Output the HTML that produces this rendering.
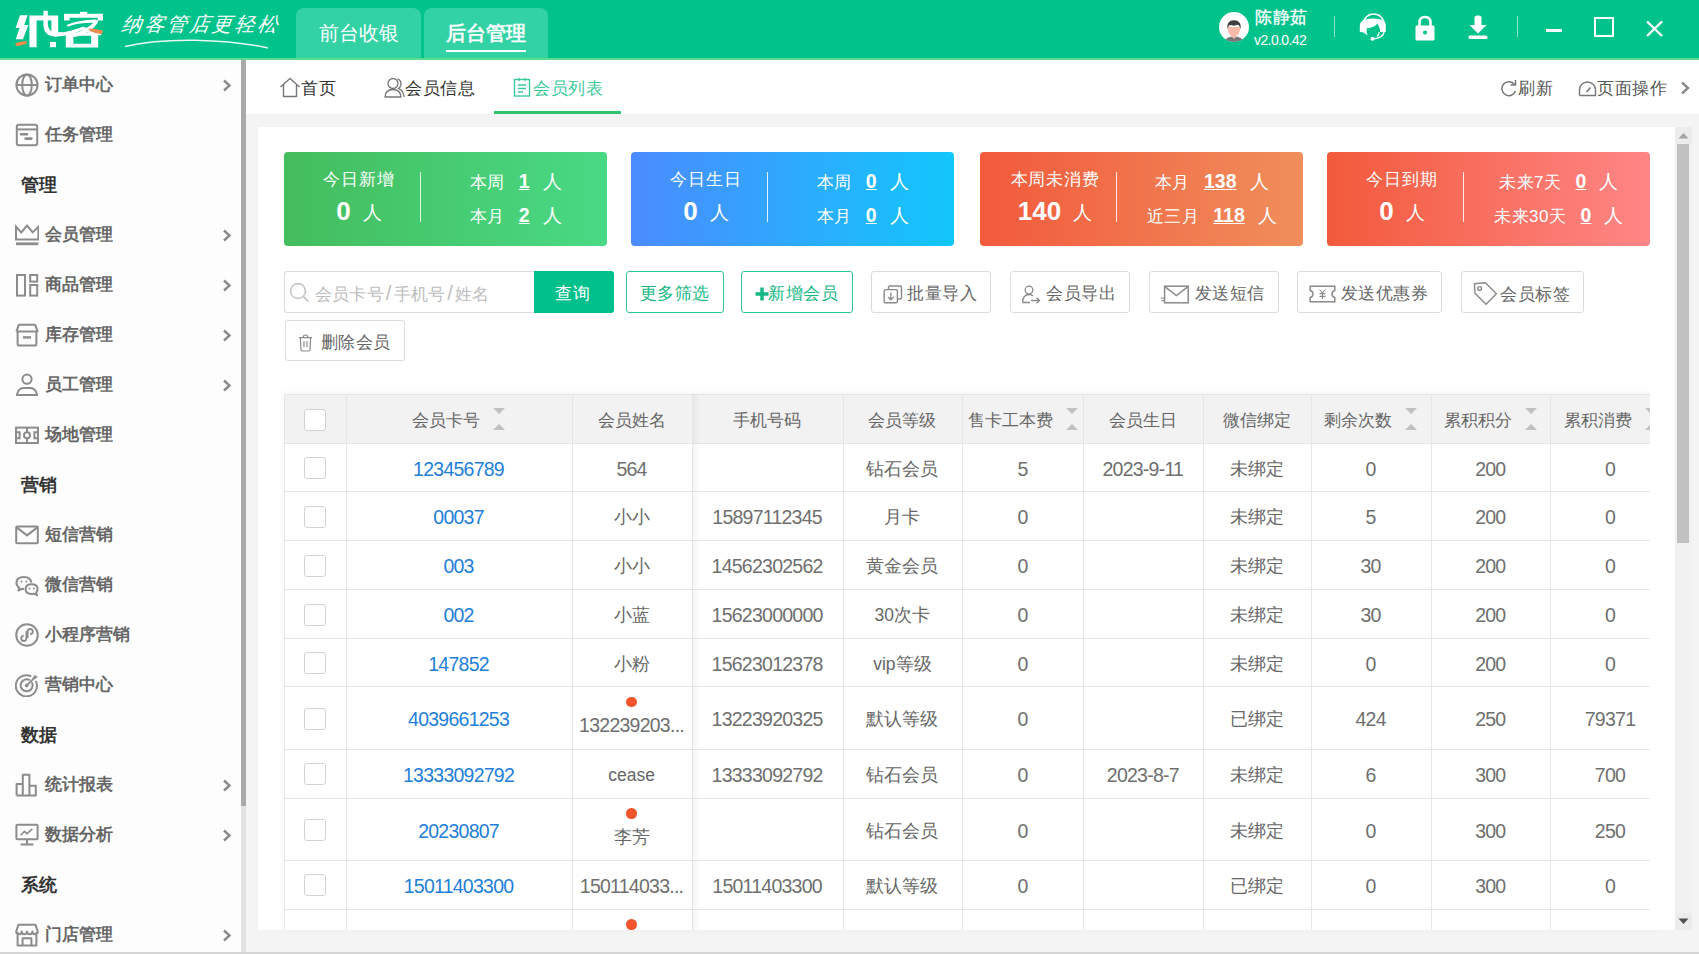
<!DOCTYPE html>
<html><head><meta charset="utf-8">
<style>
*{margin:0;padding:0;box-sizing:border-box}
html,body{width:1699px;height:954px;overflow:hidden;background:#f4f4f4;font-family:"Liberation Sans",sans-serif;}
.a{position:absolute}
.hdr{left:0;top:0;width:1699px;height:58px;background:#00c28b}
.hline{left:0;top:58px;width:1699px;height:2px;background:#5bdc8e}
.tab{top:8px;height:50px;background:#33d2a5;border-radius:8px 8px 0 0;color:#fff;font-size:20px;text-align:center;line-height:50px}
.side{left:0;top:60px;width:241px;height:894px;background:#fdfdfd}
.sb{left:241px;top:60px;width:5px;height:894px;background:#e2e2e2}
.sbt{left:241px;top:60px;width:5px;height:746px;background:#a9a9a9}
.mi{left:0;width:241px;height:50px}
.mi .t{position:absolute;left:45px;top:0;line-height:50px;font-size:17px;color:#666;font-weight:bold}
.mi .ic{position:absolute;left:15px;top:13px;width:24px;height:24px}
.mi .chev{position:absolute;left:222px;top:19px;width:10px;height:13px}
.sec{left:21px;width:200px;height:50px;line-height:50px;font-size:18px;color:#333;font-weight:bold}
.tabbar{left:246px;top:60px;width:1453px;height:54px;background:#fff}
.tt{top:62px;height:54px;line-height:54px;font-size:17px;letter-spacing:0.6px;color:#333}
.card{left:258px;top:127px;width:1417px;height:803px;background:#fff}
.vsb{left:1675px;top:127px;width:17px;height:803px;background:#f1f1f1}
.stat{top:152px;width:323px;height:94px;border-radius:4px;color:#fff}
.btn{top:271px;height:42px;border:1px solid #dcdcdc;border-radius:2px;background:#fff;color:#666;font-size:17px;line-height:40px;text-align:center}
.gbtn{border-color:#1fbf8a;color:#12b07c}
table{border-collapse:collapse;table-layout:fixed}
td,th{border:1px solid #e6e6e6;text-align:center;font-weight:normal;color:#666;font-size:17px;white-space:nowrap;overflow:hidden}
th{background:#f2f2f2;height:49px}
td{height:49px}
.cb{display:inline-block;width:22px;height:22px;border:1px solid #cfcfcf;border-radius:2px;background:#fff;vertical-align:middle}
.blue{color:#1f7fd8}
.dot{display:block;width:10px;height:10px;border-radius:5px;background:#f2552c;margin:0 auto 6px}

.st1{left:0;width:150px;top:17px;text-align:center;font-size:17px;letter-spacing:0.8px;line-height:22px}
.st2{left:0;width:150px;top:44px;text-align:center;line-height:30px}
.st2 b{font-size:26px;font-weight:bold}
.st2 span{font-size:19px;margin-left:12px;position:relative;top:-1px}
.sdiv{left:136px;top:20px;width:1px;height:50px;background:rgba(255,255,255,0.85)}
.sr{left:137px;width:190px;text-align:center;font-size:17px;letter-spacing:0.5px;line-height:22px;white-space:nowrap}
.sr u{font-weight:bold;font-size:19.5px;letter-spacing:0;margin:0 13px 0 14px;text-decoration-thickness:1.2px;text-underline-offset:1px}
.sr span:last-child{font-size:18.5px}

.hl{left:0;width:1400px;height:1px;background:#e6e6e6}
.vl{top:0;width:1px;height:600px;background:#e6e6e6}
.cbx{width:22px;height:22px;border:1px solid #d2d2d2;border-radius:3px;background:#fff}
.th{text-align:center;font-size:17px;color:#666;white-space:nowrap}
.td{text-align:center;font-size:17.5px;color:#666;white-space:nowrap}
.td.blue{color:#1f80d9}
.sort{display:inline-block;position:relative;width:12px;height:22px;margin-left:13px;vertical-align:middle;top:-2px}
.sort:before{content:"";position:absolute;left:0;top:0;border-left:6px solid transparent;border-right:6px solid transparent;border-top:6px solid #c0c0c0}
.sort:after{content:"";position:absolute;left:0;bottom:0;border-left:6px solid transparent;border-right:6px solid transparent;border-bottom:6px solid #c0c0c0}
.dotcell{display:flex;flex-direction:column;align-items:center;justify-content:center}
.dot{width:10.5px;height:10.5px;border-radius:50%;background:#f2552c}
.num{font-size:19.5px;letter-spacing:-0.75px;color:#6f6f6f}
.dotcell span{line-height:22px}

.bx{top:271px;height:42px;border:1px solid #dcdcdc;border-radius:3px;background:#fff}
.gb{border:1.5px solid #2cc79a}
.bt{font-size:17px;letter-spacing:0.5px;line-height:22px;margin-top:0.5px;color:#666;white-space:nowrap}
.sl{font-size:20px;margin:0 2px}
</style></head>
<body>
<!-- HEADER -->
<div class="a hdr"></div>
<div class="a hline"></div>
<svg class="a" style="left:0;top:0" width="290" height="58" viewBox="0 0 290 58">
<g fill="#fff">
<path d="M20 15.3H27.6L24.2 25H28.4L22.9 39.2H15.8L19.6 28H15.6L20 15.3Z"/>
<path d="M29.4 15.6H58.2V34.6H51.4V20.4H36.6V47.2H29.4Z"/>
<path d="M43.4 10.8H47.8V22Q47.8 30 52 31.5Q56 33 62 31.8L63 35.5Q55 38 48.5 35Q43.4 32 43.4 24Z"/>
<path d="M50 42H56V47.2H50Z"/>
<path d="M80 11.8H87.2V15.2H80Z"/>
<path d="M64 13.8H103V20.4H97.6V17.8H69.6V20.6H64Z"/>
<path d="M68 26.8Q76 23 93.5 22.8Q86 30 70 35.5L75 37Q92 33 98.2 22Q98 19.6 95 19.6Q80 19.8 66.5 25Z"/>
<path d="M60 33Q75 30 83 26.5Q92 31 102 32.6L100.5 35.4Q90 34 82 30.2Q74 34 61.5 36.2Z"/>
<path d="M65.8 32.4H98.2V47.6H65.8ZM73.4 35.8V43.8H91.2V35.8Z" fill-rule="evenodd"/>
</g>
<path d="M15.2 43.5Q20 41 27 41.2L26.5 43.8Q22 45.8 16 46Z" fill="#f08a4b"/>
<path d="M88.6 28.6Q95 28.8 102.8 30.5L102.2 34.2Q96 34 90 31Z" fill="#f08a4b"/>
<path d="M125 46.5Q155 39.5 195 40.2Q240 41.5 268 48" stroke="#fff" stroke-width="1.5" fill="none" opacity="0.9"/>
</svg>
<div class="a" style="left:122px;top:10px;font-size:20px;color:#fff;letter-spacing:2.6px;line-height:28px;font-style:italic;transform:skewX(-8deg)">纳客管店更轻松</div>
<div class="a tab" style="left:296px;width:125px">前台收银</div>
<div class="a tab" style="left:424px;width:124px;font-weight:bold">后台管理</div>
<div class="a" style="left:446px;top:50px;width:80px;height:2px;background:#fff"></div>


<!-- header right -->
<svg class="a" style="left:1219px;top:12px" width="30" height="30" viewBox="0 0 30 30">
<defs><clipPath id="av"><circle cx="15" cy="15" r="15"/></clipPath></defs>
<circle cx="15" cy="15" r="15" fill="#fff"/>
<g clip-path="url(#av)">
<path d="M5.5 32Q5 24.5 15 24.5Q25 24.5 24.5 32Z" fill="#767676"/>
<path d="M13.5 21H16.5V25.5L15 27L13.5 25.5Z" fill="#f5b5a3"/>
<path d="M8.8 15Q8.8 24 15 24.5Q21.2 24 21.2 15Z" fill="#f7baa8"/>
<path d="M8.2 17Q7.5 8.5 15 8.3Q22.5 8.5 21.8 17L20.5 14.5Q20 12 17.5 13Q15 14 12 13Q9.5 12.5 9.5 14.5Z" fill="#3d3d3d"/>
</g></svg>
<div class="a" style="left:1255px;top:7px;font-size:17px;color:#fff;line-height:22px;letter-spacing:0.5px;-webkit-text-stroke:0.3px #fff">陈静茹</div>
<div class="a" style="left:1254px;top:30px;font-size:14px;color:#fff;line-height:20px;letter-spacing:-0.6px">v2.0.0.42</div>
<div class="a" style="left:1334px;top:16px;width:1px;height:21px;background:rgba(255,255,255,0.55)"></div>
<svg class="a" style="left:1355px;top:8px" width="40" height="38" viewBox="0 0 40 38">
<path d="M8.2 16.5A10.5 10.5 0 0 1 29.2 16.5" stroke="#fff" stroke-width="1.5" fill="none"/>
<path d="M4.8 24V17.5Q5.2 10.5 18 10.5Q30.8 10.5 30.8 17.5V24H25.2Q24.8 18.5 22.2 15.8Q19.5 19.8 11.8 20.2Q11.2 24 12.6 27.6L8.6 24.6Q8 24 4.8 24Z" fill="#fff"/><path d="M24.2 24Q24 27 22 28.5" stroke="#fff" stroke-width="1.2" fill="none"/>
<path d="M29 24Q28.5 30 18 31" stroke="#fff" stroke-width="1.5" fill="none"/>
<circle cx="17.5" cy="30.8" r="2" fill="#fff"/>
</svg>
<svg class="a" style="left:1413px;top:14px" width="24" height="28" viewBox="0 0 24 28">
<path d="M6.5 12V8.5Q6.5 3 12 3Q17.5 3 17.5 8.5V12" stroke="#fff" stroke-width="2.6" fill="none"/>
<rect x="2.5" y="11.5" width="19" height="15" rx="1.5" fill="#fff"/>
<circle cx="12" cy="18.5" r="2" fill="#00c28b"/>
</svg>
<svg class="a" style="left:1466px;top:14px" width="24" height="28" viewBox="0 0 24 28">
<path d="M8.5 4Q8.5 1.5 11 1.5H13Q15.5 1.5 15.5 4V11H20.5L12 19.5L3.5 11H8.5Z" fill="#fff"/>
<rect x="2.5" y="21.5" width="19" height="3.5" rx="1.5" fill="#fff"/>
</svg>
<div class="a" style="left:1517px;top:16px;width:1px;height:21px;background:rgba(255,255,255,0.55)"></div>
<div class="a" style="left:1546px;top:29px;width:16px;height:3px;background:#fff"></div>
<div class="a" style="left:1594px;top:17px;width:20px;height:20px;border:2.4px solid #fff"></div>
<svg class="a" style="left:1645px;top:19px" width="19" height="19" viewBox="0 0 19 19"><path d="M2 2.5L17 17M17 2.5L2 17" stroke="#fff" stroke-width="2.4"/></svg>

<!-- SIDEBAR -->
<div class="a side"></div>
<div class="a sb"></div>
<div class="a sbt"></div>
<div class="a mi" style="top:60px"><svg class="ic" viewBox="0 0 24 24"><circle cx="12" cy="12" r="10.6" stroke="#8c8c8c" stroke-width="2" fill="none"/><ellipse cx="12" cy="12" rx="4.8" ry="10.6" stroke="#8c8c8c" stroke-width="2" fill="none"/><path d="M1.4 12H22.6" stroke="#8c8c8c" stroke-width="2" fill="none"/></svg><span class="t">订单中心</span><svg class="chev" viewBox="0 0 10 13"><path d="M2 1.5L7.5 6.5L2 11.5" stroke="#8a8a8a" stroke-width="2.4" fill="none"/></svg></div>
<div class="a mi" style="top:110px"><svg class="ic" viewBox="0 0 24 24"><rect x="1.8" y="1.8" width="20.4" height="20.4" rx="2.2" stroke="#8c8c8c" stroke-width="2" fill="none"/><path d="M1.8 6.4H22.2" stroke="#8c8c8c" stroke-width="2" fill="none"/><path d="M6 11.2H12M10.6 15.6H16.4" stroke="#8c8c8c" stroke-width="2.6" stroke-linecap="round" fill="none"/></svg><span class="t">任务管理</span></div>
<div class="a sec" style="top:160px">管理</div>
<div class="a mi" style="top:210px"><svg class="ic" viewBox="0 0 24 24"><path d="M1 3.8L6.3 9.4L12 2.6L17.7 9.4L23.4 3.8V16.4H1Z" stroke="#8c8c8c" stroke-width="2" fill="none" stroke-linejoin="miter"/><path d="M1 20.8H23.4" stroke="#8c8c8c" stroke-width="2.8" fill="none"/></svg><span class="t">会员管理</span><svg class="chev" viewBox="0 0 10 13"><path d="M2 1.5L7.5 6.5L2 11.5" stroke="#8a8a8a" stroke-width="2.4" fill="none"/></svg></div>
<div class="a mi" style="top:260px"><svg class="ic" viewBox="0 0 24 24"><rect x="2" y="2" width="8" height="20.6" stroke="#8c8c8c" stroke-width="2" fill="none"/><rect x="15.2" y="2" width="7" height="6.6" stroke="#8c8c8c" stroke-width="2" fill="none"/><rect x="15.2" y="12" width="7" height="10.6" stroke="#8c8c8c" stroke-width="2" fill="none"/></svg><span class="t">商品管理</span><svg class="chev" viewBox="0 0 10 13"><path d="M2 1.5L7.5 6.5L2 11.5" stroke="#8a8a8a" stroke-width="2.4" fill="none"/></svg></div>
<div class="a mi" style="top:310px"><svg class="ic" viewBox="0 0 24 24"><path d="M2.6 8.8V20.4Q2.6 22.6 4.8 22.6H19.2Q21.4 22.6 21.4 20.4V8.8M1.4 8.4L3.8 1.8H20.2L22.6 8.4H1.4" stroke="#8c8c8c" stroke-width="2" fill="none" stroke-linejoin="round"/><path d="M8 14.4H16" stroke="#8c8c8c" stroke-width="2.4" fill="none"/></svg><span class="t">库存管理</span><svg class="chev" viewBox="0 0 10 13"><path d="M2 1.5L7.5 6.5L2 11.5" stroke="#8a8a8a" stroke-width="2.4" fill="none"/></svg></div>
<div class="a mi" style="top:360px"><svg class="ic" viewBox="0 0 24 24"><circle cx="12" cy="6.2" r="4.6" stroke="#8c8c8c" stroke-width="2" fill="none"/><path d="M1.8 22Q3.6 15 8.2 15H15.8Q20.4 15 22.2 22Z" stroke="#8c8c8c" stroke-width="2" fill="none" stroke-linejoin="round"/></svg><span class="t">员工管理</span><svg class="chev" viewBox="0 0 10 13"><path d="M2 1.5L7.5 6.5L2 11.5" stroke="#8a8a8a" stroke-width="2.4" fill="none"/></svg></div>
<div class="a mi" style="top:410px"><svg class="ic" viewBox="0 0 24 24"><rect x="1" y="4.6" width="22" height="15.4" stroke="#8c8c8c" stroke-width="2" fill="none"/><path d="M12 4.6V9M12 15.4V20M1 9.2H4.6V15.2H1M23 9.2H19.4V15.2H23" stroke="#8c8c8c" stroke-width="2" fill="none"/><circle cx="12" cy="12.2" r="3" stroke="#8c8c8c" stroke-width="2" fill="none"/></svg><span class="t">场地管理</span></div>
<div class="a sec" style="top:460px">营销</div>
<div class="a mi" style="top:510px"><svg class="ic" viewBox="0 0 24 24"><rect x="1.2" y="3.6" width="21.6" height="16.6" rx="1" stroke="#8c8c8c" stroke-width="2" fill="none"/><path d="M1.6 4.4L12 12.4L22.4 4.4" stroke="#8c8c8c" stroke-width="2" fill="none"/></svg><span class="t">短信营销</span></div>
<div class="a mi" style="top:560px"><svg class="ic" viewBox="0 0 24 24"><path d="M16.4 9.6Q15.4 4 9 4Q1.6 4 1.4 9.8Q1.4 13 4.4 14.8L3.4 17.6L7 15.8Q8 16.1 9.2 16.1" stroke="#8c8c8c" stroke-width="2" fill="none" stroke-linejoin="round"/><path d="M22.6 16.1Q22.6 11.2 16.6 11.2Q10.6 11.2 10.6 16.1Q10.6 21 16.6 21Q17.8 21 18.8 20.6L22 22.2L21.2 19.6Q22.6 18.3 22.6 16.1Z" stroke="#8c8c8c" stroke-width="2" fill="none" stroke-linejoin="round"/><circle cx="6.5" cy="8.6" r="1" fill="#8c8c8c"/><circle cx="11.4" cy="8.6" r="1" fill="#8c8c8c"/><circle cx="14.5" cy="15.6" r="1" fill="#8c8c8c"/><circle cx="18.8" cy="15.6" r="1" fill="#8c8c8c"/></svg><span class="t">微信营销</span></div>
<div class="a mi" style="top:610px"><svg class="ic" viewBox="0 0 24 24"><circle cx="12" cy="12" r="10.8" stroke="#8c8c8c" stroke-width="2" fill="none"/><path d="M11.4 15.2Q11.4 18 8.8 18Q6.2 18 6.2 15.4Q6.2 13 8.8 12.6M12.6 8.8Q12.6 6 15.2 6Q17.8 6 17.8 8.6Q17.8 11 15.2 11.4M11.4 15.2V8.8Q11.4 8.8 12.6 8.8V15.2" stroke="#8c8c8c" stroke-width="1.8" fill="none"/></svg><span class="t">小程序营销</span></div>
<div class="a mi" style="top:660px"><svg class="ic" viewBox="0 0 24 24"><path d="M20.8 8A10.6 10.6 0 1 1 16.2 3.4" stroke="#8c8c8c" stroke-width="2" fill="none"/><path d="M16.8 9.2A6 6 0 1 1 14.8 7.2" stroke="#8c8c8c" stroke-width="2" fill="none"/><circle cx="11.6" cy="12.6" r="1.8" fill="#8c8c8c"/><path d="M11.6 12.6L19.8 4.4" stroke="#8c8c8c" stroke-width="2" fill="none"/><path d="M17.6 4.6L20.6 1.4L21 3.2L23 3.6L19.8 6.6Z" fill="#8c8c8c"/></svg><span class="t">营销中心</span></div>
<div class="a sec" style="top:710px">数据</div>
<div class="a mi" style="top:760px"><svg class="ic" viewBox="0 0 24 24"><path d="M1.6 22.4V11H7.8V22.4M7.8 22.4V1.8H14.4V22.4M14.4 22.4V12.8H20.8V22.4H1.6" stroke="#8c8c8c" stroke-width="2" fill="none" stroke-linejoin="round"/></svg><span class="t">统计报表</span><svg class="chev" viewBox="0 0 10 13"><path d="M2 1.5L7.5 6.5L2 11.5" stroke="#8a8a8a" stroke-width="2.4" fill="none"/></svg></div>
<div class="a mi" style="top:810px"><svg class="ic" viewBox="0 0 24 24"><rect x="1.4" y="1.8" width="21.2" height="14.4" rx="1" stroke="#8c8c8c" stroke-width="2" fill="none"/><path d="M12 16.2V20.6M5.6 21.6H18.4" stroke="#8c8c8c" stroke-width="2" fill="none"/><path d="M5.6 12.2L9.4 8.4L12 10.6L17.4 5.8" stroke="#8c8c8c" stroke-width="1.6" fill="none"/></svg><span class="t">数据分析</span><svg class="chev" viewBox="0 0 10 13"><path d="M2 1.5L7.5 6.5L2 11.5" stroke="#8a8a8a" stroke-width="2.4" fill="none"/></svg></div>
<div class="a sec" style="top:860px">系统</div>
<div class="a mi" style="top:910px"><svg class="ic" viewBox="0 0 24 24"><path d="M2.6 9V22.4H21.4V9M1.2 8.6L3.4 1.8H20.6L22.8 8.6Q22.8 11.2 20 11.2Q17.4 11.2 17.4 8.6Q17.4 11.2 14.7 11.2Q12 11.2 12 8.6Q12 11.2 9.3 11.2Q6.6 11.2 6.6 8.6Q6.6 11.2 4 11.2Q1.2 11.2 1.2 8.6ZM7.6 22.4V15.2H16.4V22.4" stroke="#8c8c8c" stroke-width="2" fill="none" stroke-linejoin="round"/></svg><span class="t">门店管理</span><svg class="chev" viewBox="0 0 10 13"><path d="M2 1.5L7.5 6.5L2 11.5" stroke="#8a8a8a" stroke-width="2.4" fill="none"/></svg></div>

<!-- TAB BAR -->
<div class="a tabbar"></div>
<div class="a tt" style="left:301px">首页</div>
<div class="a tt" style="left:405px">会员信息</div>
<div class="a tt" style="left:533px;color:#3cc99a">会员列表</div>
<div class="a" style="left:494px;top:111px;width:127px;height:3px;background:#2ec46c"></div>
<div class="a tt" style="left:1518px;color:#555">刷新</div>
<div class="a tt" style="left:1597px;color:#555">页面操作</div>


<svg class="a" style="left:279px;top:77px" width="22" height="21" viewBox="0 0 22 21"><path d="M1.5 10L11 1.5L20.5 10M4.5 8V19.5H17.5V8" stroke="#777" stroke-width="1.4" fill="none" stroke-linejoin="round"/></svg>
<svg class="a" style="left:384px;top:77px" width="21" height="21" viewBox="0 0 21 21"><circle cx="9" cy="6.5" r="5" stroke="#777" stroke-width="1.3" fill="none"/><path d="M1 20Q1.5 12.5 9 12.5Q16.5 12.5 17 20Z" stroke="#777" stroke-width="1.3" fill="none" stroke-linejoin="round"/><path d="M13.5 1.8Q17.5 3 16.8 8.2Q16 10.5 14.5 11.5Q19.5 13.5 20 20" stroke="#777" stroke-width="1.3" fill="none"/></svg>
<svg class="a" style="left:513px;top:77px" width="19" height="20" viewBox="0 0 19 20"><rect x="1.5" y="2.5" width="15" height="16.5" stroke="#3cc99a" stroke-width="1.4" fill="none"/><path d="M6 1V4M12 1V4M5 8H13M5 11.5H13M5 15H10" stroke="#3cc99a" stroke-width="1.4" fill="none"/></svg>
<svg class="a" style="left:1500px;top:79px" width="18" height="18" viewBox="0 0 18 18"><path d="M14.5 5.5A7 7 0 1 0 15.5 12" stroke="#777" stroke-width="1.5" fill="none"/><path d="M10.5 6H15.5V1" stroke="#777" stroke-width="1.5" fill="none"/></svg>
<svg class="a" style="left:1578px;top:80px" width="19" height="17" viewBox="0 0 19 17"><path d="M1.5 15.5V10A8 8 0 0 1 17.5 10V15.5H1.5" stroke="#777" stroke-width="1.4" fill="none"/><path d="M8.5 12L12.5 7.5" stroke="#777" stroke-width="1.6"/></svg>
<svg class="a" style="left:1680px;top:81px" width="11" height="14" viewBox="0 0 11 14"><path d="M2 1.5L8 7L2 12.5" stroke="#8a8a8a" stroke-width="2.4" fill="none"/></svg>

<!-- CARD -->
<div class="a card"></div>
<div class="a vsb"></div>
<!-- STAT CARDS -->
<div class="a stat" style="left:284px;background:linear-gradient(90deg,#44bd5d,#49d985)"><div class="a st1">今日新增</div><div class="a st2"><b>0</b><span>人</span></div><div class="a sdiv"></div><div class="a sr" style="top:18px"><span>本周</span><u>1</u><span>人</span></div><div class="a sr" style="top:52px"><span>本月</span><u>2</u><span>人</span></div></div>
<div class="a stat" style="left:631px;background:linear-gradient(90deg,#4b8bff,#12c7fb)"><div class="a st1">今日生日</div><div class="a st2"><b>0</b><span>人</span></div><div class="a sdiv"></div><div class="a sr" style="top:18px"><span>本周</span><u>0</u><span>人</span></div><div class="a sr" style="top:52px"><span>本月</span><u>0</u><span>人</span></div></div>
<div class="a stat" style="left:980px;background:linear-gradient(90deg,#f25a3b,#f08e5c)"><div class="a st1">本周未消费</div><div class="a st2"><b>140</b><span>人</span></div><div class="a sdiv"></div><div class="a sr" style="top:18px"><span>本月</span><u>138</u><span>人</span></div><div class="a sr" style="top:52px"><span>近三月</span><u>118</u><span>人</span></div></div>
<div class="a stat" style="left:1327px;background:linear-gradient(90deg,#f25a3b,#ff8686)"><div class="a st1">今日到期</div><div class="a st2"><b>0</b><span>人</span></div><div class="a sdiv"></div><div class="a sr" style="top:18px"><span>未来7天</span><u>0</u><span>人</span></div><div class="a sr" style="top:52px"><span>未来30天</span><u>0</u><span>人</span></div></div>
<!-- TABLE -->
<div class="a" style="left:284px;top:394px;width:1380px;height:536px;box-shadow:0 -1px 7px rgba(0,0,0,0.05)"></div>
<div class="a" style="left:1650px;top:380px;width:25px;height:550px;background:#fff"></div>
<div class="a" style="left:284px;top:394px;width:1366px;height:536px;overflow:hidden">
<div class="a" style="left:0;top:0;width:1400px;height:48.9px;background:#f2f2f2"></div>
<div class="a hl" style="top:0.3px"></div>
<div class="a hl" style="top:48.9px"></div>
<div class="a hl" style="top:97.4px"></div>
<div class="a hl" style="top:146.4px"></div>
<div class="a hl" style="top:195.3px"></div>
<div class="a hl" style="top:243.9px"></div>
<div class="a hl" style="top:292.3px"></div>
<div class="a hl" style="top:354.8px"></div>
<div class="a hl" style="top:403.6px"></div>
<div class="a hl" style="top:465.6px"></div>
<div class="a hl" style="top:514.6px"></div>
<div class="a vl" style="left:0.0px"></div>
<div class="a vl" style="left:61.5px"></div>
<div class="a vl" style="left:287.6px"></div>
<div class="a vl" style="left:407.5px"></div>
<div class="a vl" style="left:558.7px"></div>
<div class="a vl" style="left:678.0px"></div>
<div class="a vl" style="left:799.0px"></div>
<div class="a vl" style="left:918.7px"></div>
<div class="a vl" style="left:1026.6px"></div>
<div class="a vl" style="left:1146.6px"></div>
<div class="a vl" style="left:1266.0px"></div>
<div class="a cbx" style="left:19.8px;top:14.6px"></div>
<div class="a th" style="left:61.5px;width:226.1px;top:2.8px;height:48.6px;line-height:48.6px">会员卡号<i class="sort"></i></div>
<div class="a th" style="left:287.6px;width:119.9px;top:2.8px;height:48.6px;line-height:48.6px">会员姓名</div>
<div class="a th" style="left:407.5px;width:151.2px;top:2.8px;height:48.6px;line-height:48.6px">手机号码</div>
<div class="a th" style="left:558.7px;width:119.3px;top:2.8px;height:48.6px;line-height:48.6px">会员等级</div>
<div class="a th" style="left:678.0px;width:121.0px;top:2.8px;height:48.6px;line-height:48.6px">售卡工本费<i class="sort"></i></div>
<div class="a th" style="left:799.0px;width:119.7px;top:2.8px;height:48.6px;line-height:48.6px">会员生日</div>
<div class="a th" style="left:918.7px;width:107.9px;top:2.8px;height:48.6px;line-height:48.6px">微信绑定</div>
<div class="a th" style="left:1026.6px;width:120.0px;top:2.8px;height:48.6px;line-height:48.6px">剩余次数<i class="sort"></i></div>
<div class="a th" style="left:1146.6px;width:119.4px;top:2.8px;height:48.6px;line-height:48.6px">累积积分<i class="sort"></i></div>
<div class="a th" style="left:1266.0px;width:120.0px;top:2.8px;height:48.6px;line-height:48.6px">累积消费<i class="sort"></i></div>
<div class="a cbx" style="left:19.8px;top:63.1px"></div>
<div class="a td blue num" style="left:61.5px;width:226.1px;top:50.9px;height:48.5px;line-height:48.5px">123456789</div>
<div class="a td num" style="left:287.6px;width:119.9px;top:50.9px;height:48.5px;line-height:48.5px">564</div>
<div class="a td" style="left:407.5px;width:151.2px;top:50.9px;height:48.5px;line-height:48.5px"></div>
<div class="a td" style="left:558.7px;width:119.3px;top:50.9px;height:48.5px;line-height:48.5px">钻石会员</div>
<div class="a td num" style="left:678.0px;width:121.0px;top:50.9px;height:48.5px;line-height:48.5px">5</div>
<div class="a td num" style="left:799.0px;width:119.7px;top:50.9px;height:48.5px;line-height:48.5px">2023-9-11</div>
<div class="a td" style="left:918.7px;width:107.9px;top:50.9px;height:48.5px;line-height:48.5px">未绑定</div>
<div class="a td num" style="left:1026.6px;width:120.0px;top:50.9px;height:48.5px;line-height:48.5px">0</div>
<div class="a td num" style="left:1146.6px;width:119.4px;top:50.9px;height:48.5px;line-height:48.5px">200</div>
<div class="a td num" style="left:1266.0px;width:120.0px;top:50.9px;height:48.5px;line-height:48.5px">0</div>
<div class="a cbx" style="left:19.8px;top:111.9px"></div>
<div class="a td blue num" style="left:61.5px;width:226.1px;top:99.4px;height:49.0px;line-height:49.0px">00037</div>
<div class="a td" style="left:287.6px;width:119.9px;top:99.4px;height:49.0px;line-height:49.0px">小小</div>
<div class="a td num" style="left:407.5px;width:151.2px;top:99.4px;height:49.0px;line-height:49.0px">15897112345</div>
<div class="a td" style="left:558.7px;width:119.3px;top:99.4px;height:49.0px;line-height:49.0px">月卡</div>
<div class="a td num" style="left:678.0px;width:121.0px;top:99.4px;height:49.0px;line-height:49.0px">0</div>
<div class="a td" style="left:799.0px;width:119.7px;top:99.4px;height:49.0px;line-height:49.0px"></div>
<div class="a td" style="left:918.7px;width:107.9px;top:99.4px;height:49.0px;line-height:49.0px">未绑定</div>
<div class="a td num" style="left:1026.6px;width:120.0px;top:99.4px;height:49.0px;line-height:49.0px">5</div>
<div class="a td num" style="left:1146.6px;width:119.4px;top:99.4px;height:49.0px;line-height:49.0px">200</div>
<div class="a td num" style="left:1266.0px;width:120.0px;top:99.4px;height:49.0px;line-height:49.0px">0</div>
<div class="a cbx" style="left:19.8px;top:160.8px"></div>
<div class="a td blue num" style="left:61.5px;width:226.1px;top:148.4px;height:48.9px;line-height:48.9px">003</div>
<div class="a td" style="left:287.6px;width:119.9px;top:148.4px;height:48.9px;line-height:48.9px">小小</div>
<div class="a td num" style="left:407.5px;width:151.2px;top:148.4px;height:48.9px;line-height:48.9px">14562302562</div>
<div class="a td" style="left:558.7px;width:119.3px;top:148.4px;height:48.9px;line-height:48.9px">黄金会员</div>
<div class="a td num" style="left:678.0px;width:121.0px;top:148.4px;height:48.9px;line-height:48.9px">0</div>
<div class="a td" style="left:799.0px;width:119.7px;top:148.4px;height:48.9px;line-height:48.9px"></div>
<div class="a td" style="left:918.7px;width:107.9px;top:148.4px;height:48.9px;line-height:48.9px">未绑定</div>
<div class="a td num" style="left:1026.6px;width:120.0px;top:148.4px;height:48.9px;line-height:48.9px">30</div>
<div class="a td num" style="left:1146.6px;width:119.4px;top:148.4px;height:48.9px;line-height:48.9px">200</div>
<div class="a td num" style="left:1266.0px;width:120.0px;top:148.4px;height:48.9px;line-height:48.9px">0</div>
<div class="a cbx" style="left:19.8px;top:209.6px"></div>
<div class="a td blue num" style="left:61.5px;width:226.1px;top:197.3px;height:48.6px;line-height:48.6px">002</div>
<div class="a td" style="left:287.6px;width:119.9px;top:197.3px;height:48.6px;line-height:48.6px">小蓝</div>
<div class="a td num" style="left:407.5px;width:151.2px;top:197.3px;height:48.6px;line-height:48.6px">15623000000</div>
<div class="a td" style="left:558.7px;width:119.3px;top:197.3px;height:48.6px;line-height:48.6px">30次卡</div>
<div class="a td num" style="left:678.0px;width:121.0px;top:197.3px;height:48.6px;line-height:48.6px">0</div>
<div class="a td" style="left:799.0px;width:119.7px;top:197.3px;height:48.6px;line-height:48.6px"></div>
<div class="a td" style="left:918.7px;width:107.9px;top:197.3px;height:48.6px;line-height:48.6px">未绑定</div>
<div class="a td num" style="left:1026.6px;width:120.0px;top:197.3px;height:48.6px;line-height:48.6px">30</div>
<div class="a td num" style="left:1146.6px;width:119.4px;top:197.3px;height:48.6px;line-height:48.6px">200</div>
<div class="a td num" style="left:1266.0px;width:120.0px;top:197.3px;height:48.6px;line-height:48.6px">0</div>
<div class="a cbx" style="left:19.8px;top:258.1px"></div>
<div class="a td blue num" style="left:61.5px;width:226.1px;top:245.9px;height:48.4px;line-height:48.4px">147852</div>
<div class="a td" style="left:287.6px;width:119.9px;top:245.9px;height:48.4px;line-height:48.4px">小粉</div>
<div class="a td num" style="left:407.5px;width:151.2px;top:245.9px;height:48.4px;line-height:48.4px">15623012378</div>
<div class="a td" style="left:558.7px;width:119.3px;top:245.9px;height:48.4px;line-height:48.4px">vip等级</div>
<div class="a td num" style="left:678.0px;width:121.0px;top:245.9px;height:48.4px;line-height:48.4px">0</div>
<div class="a td" style="left:799.0px;width:119.7px;top:245.9px;height:48.4px;line-height:48.4px"></div>
<div class="a td" style="left:918.7px;width:107.9px;top:245.9px;height:48.4px;line-height:48.4px">未绑定</div>
<div class="a td num" style="left:1026.6px;width:120.0px;top:245.9px;height:48.4px;line-height:48.4px">0</div>
<div class="a td num" style="left:1146.6px;width:119.4px;top:245.9px;height:48.4px;line-height:48.4px">200</div>
<div class="a td num" style="left:1266.0px;width:120.0px;top:245.9px;height:48.4px;line-height:48.4px">0</div>
<div class="a cbx" style="left:19.8px;top:313.5px"></div>
<div class="a td blue num" style="left:61.5px;width:226.1px;top:294.3px;height:62.5px;line-height:62.5px">4039661253</div>
<div class="a dot" style="left:342.3px;top:302.7px"></div>
<div class="a td num" style="left:287.6px;width:119.9px;top:320.3px;height:22px;line-height:22px">132239203...</div>
<div class="a td num" style="left:407.5px;width:151.2px;top:294.3px;height:62.5px;line-height:62.5px">13223920325</div>
<div class="a td" style="left:558.7px;width:119.3px;top:294.3px;height:62.5px;line-height:62.5px">默认等级</div>
<div class="a td num" style="left:678.0px;width:121.0px;top:294.3px;height:62.5px;line-height:62.5px">0</div>
<div class="a td" style="left:799.0px;width:119.7px;top:294.3px;height:62.5px;line-height:62.5px"></div>
<div class="a td" style="left:918.7px;width:107.9px;top:294.3px;height:62.5px;line-height:62.5px">已绑定</div>
<div class="a td num" style="left:1026.6px;width:120.0px;top:294.3px;height:62.5px;line-height:62.5px">424</div>
<div class="a td num" style="left:1146.6px;width:119.4px;top:294.3px;height:62.5px;line-height:62.5px">250</div>
<div class="a td num" style="left:1266.0px;width:120.0px;top:294.3px;height:62.5px;line-height:62.5px">79371</div>
<div class="a cbx" style="left:19.8px;top:369.2px"></div>
<div class="a td blue num" style="left:61.5px;width:226.1px;top:356.8px;height:48.8px;line-height:48.8px">13333092792</div>
<div class="a td" style="left:287.6px;width:119.9px;top:356.8px;height:48.8px;line-height:48.8px">cease</div>
<div class="a td num" style="left:407.5px;width:151.2px;top:356.8px;height:48.8px;line-height:48.8px">13333092792</div>
<div class="a td" style="left:558.7px;width:119.3px;top:356.8px;height:48.8px;line-height:48.8px">钻石会员</div>
<div class="a td num" style="left:678.0px;width:121.0px;top:356.8px;height:48.8px;line-height:48.8px">0</div>
<div class="a td num" style="left:799.0px;width:119.7px;top:356.8px;height:48.8px;line-height:48.8px">2023-8-7</div>
<div class="a td" style="left:918.7px;width:107.9px;top:356.8px;height:48.8px;line-height:48.8px">未绑定</div>
<div class="a td num" style="left:1026.6px;width:120.0px;top:356.8px;height:48.8px;line-height:48.8px">6</div>
<div class="a td num" style="left:1146.6px;width:119.4px;top:356.8px;height:48.8px;line-height:48.8px">300</div>
<div class="a td num" style="left:1266.0px;width:120.0px;top:356.8px;height:48.8px;line-height:48.8px">700</div>
<div class="a cbx" style="left:19.8px;top:424.6px"></div>
<div class="a td blue num" style="left:61.5px;width:226.1px;top:405.6px;height:62.0px;line-height:62.0px">20230807</div>
<div class="a dot" style="left:342.3px;top:414.0px"></div>
<div class="a td" style="left:287.6px;width:119.9px;top:431.6px;height:22px;line-height:22px">李芳</div>
<div class="a td" style="left:407.5px;width:151.2px;top:405.6px;height:62.0px;line-height:62.0px"></div>
<div class="a td" style="left:558.7px;width:119.3px;top:405.6px;height:62.0px;line-height:62.0px">钻石会员</div>
<div class="a td num" style="left:678.0px;width:121.0px;top:405.6px;height:62.0px;line-height:62.0px">0</div>
<div class="a td" style="left:799.0px;width:119.7px;top:405.6px;height:62.0px;line-height:62.0px"></div>
<div class="a td" style="left:918.7px;width:107.9px;top:405.6px;height:62.0px;line-height:62.0px">未绑定</div>
<div class="a td num" style="left:1026.6px;width:120.0px;top:405.6px;height:62.0px;line-height:62.0px">0</div>
<div class="a td num" style="left:1146.6px;width:119.4px;top:405.6px;height:62.0px;line-height:62.0px">300</div>
<div class="a td num" style="left:1266.0px;width:120.0px;top:405.6px;height:62.0px;line-height:62.0px">250</div>
<div class="a cbx" style="left:19.8px;top:480.1px"></div>
<div class="a td blue num" style="left:61.5px;width:226.1px;top:467.6px;height:49.0px;line-height:49.0px">15011403300</div>
<div class="a td num" style="left:287.6px;width:119.9px;top:467.6px;height:49.0px;line-height:49.0px">150114033...</div>
<div class="a td num" style="left:407.5px;width:151.2px;top:467.6px;height:49.0px;line-height:49.0px">15011403300</div>
<div class="a td" style="left:558.7px;width:119.3px;top:467.6px;height:49.0px;line-height:49.0px">默认等级</div>
<div class="a td num" style="left:678.0px;width:121.0px;top:467.6px;height:49.0px;line-height:49.0px">0</div>
<div class="a td" style="left:799.0px;width:119.7px;top:467.6px;height:49.0px;line-height:49.0px"></div>
<div class="a td" style="left:918.7px;width:107.9px;top:467.6px;height:49.0px;line-height:49.0px">已绑定</div>
<div class="a td num" style="left:1026.6px;width:120.0px;top:467.6px;height:49.0px;line-height:49.0px">0</div>
<div class="a td num" style="left:1146.6px;width:119.4px;top:467.6px;height:49.0px;line-height:49.0px">300</div>
<div class="a td num" style="left:1266.0px;width:120.0px;top:467.6px;height:49.0px;line-height:49.0px">0</div>
<div class="a cbx" style="left:19.8px;top:535.8px"></div>
<div class="a td blue" style="left:61.5px;width:226.1px;top:516.6px;height:62.4px;line-height:62.4px"></div>
<div class="a dot" style="left:342.3px;top:525.0px"></div>
<div class="a td" style="left:287.6px;width:119.9px;top:542.6px;height:22px;line-height:22px"></div>
<div class="a td" style="left:407.5px;width:151.2px;top:516.6px;height:62.4px;line-height:62.4px"></div>
<div class="a td" style="left:558.7px;width:119.3px;top:516.6px;height:62.4px;line-height:62.4px"></div>
<div class="a td" style="left:678.0px;width:121.0px;top:516.6px;height:62.4px;line-height:62.4px"></div>
<div class="a td" style="left:799.0px;width:119.7px;top:516.6px;height:62.4px;line-height:62.4px"></div>
<div class="a td" style="left:918.7px;width:107.9px;top:516.6px;height:62.4px;line-height:62.4px"></div>
<div class="a td" style="left:1026.6px;width:120.0px;top:516.6px;height:62.4px;line-height:62.4px"></div>
<div class="a td" style="left:1146.6px;width:119.4px;top:516.6px;height:62.4px;line-height:62.4px"></div>
<div class="a td" style="left:1266.0px;width:120.0px;top:516.6px;height:62.4px;line-height:62.4px"></div>
<div class="a" style="left:408.5px;top:0;width:7px;height:600px;background:linear-gradient(90deg,rgba(0,0,0,0.045),rgba(0,0,0,0))"></div>
</div>
<!-- BUTTONS -->
<div class="a" style="left:284px;top:271px;width:251px;height:42px;border:1px solid #dcdcdc;border-right:none;background:#fff;border-radius:3px 0 0 3px"></div>
<svg class="a" style="left:289px;top:282px" width="22" height="21" viewBox="0 0 22 21"><circle cx="9" cy="9" r="7.4" stroke="#c8c8c8" stroke-width="1.7" fill="none"/><path d="M14.2 14.4L19.5 19.6" stroke="#c8c8c8" stroke-width="2"/></svg>
<div class="a bt" style="left:315px;top:281px;color:#bdbdbd;letter-spacing:0.2px">会员卡号<span class="sl">/</span>手机号<span class="sl">/</span>姓名</div>
<div class="a" style="left:534px;top:271px;width:80px;height:42px;background:#00c08b;border-radius:0 3px 3px 0"></div>
<div class="a bt" style="left:555px;top:282px;color:#fff">查询</div>
<div class="a bx gb" style="left:626px;width:98px"></div>
<div class="a bt" style="left:639.5px;top:282px;color:#14b884">更多筛选</div>
<div class="a bx gb" style="left:741px;width:111.5px"></div>
<svg class="a" style="left:755px;top:287px" width="14" height="14" viewBox="0 0 14 14"><path d="M7 0.5V13.5M0.5 7H13.5" stroke="#14b884" stroke-width="3.4"/></svg>
<div class="a bt" style="left:768px;top:282px;color:#14b884">新增会员</div>

<div class="a bx" style="left:870.5px;width:120px"></div>
<svg class="a" style="left:883px;top:285px" width="20" height="19" viewBox="0 0 20 19"><path d="M5.5 4.5V2.5Q5.5 1 7 1H17Q18.5 1 18.5 2.5V12.5Q18.5 14 17 14H15" stroke="#8a8a8a" stroke-width="1.4" fill="none"/><rect x="1.2" y="4.6" width="13.2" height="13.2" rx="1.4" stroke="#8a8a8a" stroke-width="1.4" fill="#fff"/><path d="M7.8 7.5V14.5M5 12L7.8 14.8L10.6 12" stroke="#8a8a8a" stroke-width="1.3" fill="none"/></svg>
<div class="a bt" style="left:907px;top:282px">批量导入</div>

<div class="a bx" style="left:1009.5px;width:120px"></div>
<svg class="a" style="left:1021px;top:285px" width="20" height="19" viewBox="0 0 20 19"><circle cx="8" cy="5" r="3.8" stroke="#8a8a8a" stroke-width="1.3" fill="none"/><path d="M1.5 17.5Q2 9.5 8 9.5Q10.5 9.5 12 11" stroke="#8a8a8a" stroke-width="1.3" fill="none"/><path d="M1.5 17.5H9M10 15.5H18.5M15.5 12.8L18.5 15.5L15.5 18.2" stroke="#8a8a8a" stroke-width="1.3" fill="none"/></svg>
<div class="a bt" style="left:1046px;top:282px">会员导出</div>

<div class="a bx" style="left:1148.5px;width:130px"></div>
<svg class="a" style="left:1160px;top:285px" width="30" height="19" viewBox="0 0 30 19"><rect x="4.6" y="1.2" width="23.6" height="16.6" stroke="#8a8a8a" stroke-width="1.5" fill="none"/><path d="M4.8 1.6L16.4 10.6L28 1.6" stroke="#8a8a8a" stroke-width="1.5" fill="none"/><path d="M0.6 13.2H4M1.4 15.6H4" stroke="#8a8a8a" stroke-width="1.1"/></svg>
<div class="a bt" style="left:1194.5px;top:282px">发送短信</div>

<div class="a bx" style="left:1297px;width:145px"></div>
<svg class="a" style="left:1309px;top:285px" width="27" height="18" viewBox="0 0 27 18"><path d="M1.2 1.2H25.8V5.5Q23 6.2 23 9Q23 11.8 25.8 12.5V16.8H1.2V12.5Q4 11.8 4 9Q4 6.2 1.2 5.5Z" stroke="#8a8a8a" stroke-width="1.5" fill="none"/><path d="M10.5 4.5L13.5 8L16.5 4.5M10.5 8.6H16.5M10.5 11.4H16.5M13.5 8V14" stroke="#8a8a8a" stroke-width="1.1" fill="none"/></svg>
<div class="a bt" style="left:1340.5px;top:282px">发送优惠券</div>

<div class="a bx" style="left:1461px;width:122.5px"></div>
<svg class="a" style="left:1473px;top:281px" width="25" height="25" viewBox="0 0 25 25"><path d="M1.4 2.8L2 12.2L13 23.2L23.4 12.8L12.4 1.8Z" stroke="#8a8a8a" stroke-width="1.4" fill="none" stroke-linejoin="round"/><circle cx="6.6" cy="7.5" r="1.9" stroke="#8a8a8a" stroke-width="1.4" fill="none"/></svg>
<div class="a bt" style="left:1500px;top:283px">会员标签</div>

<div class="a bx" style="left:284.5px;top:320px;width:120px;height:41px"></div>
<svg class="a" style="left:298px;top:334px" width="15" height="18" viewBox="0 0 15 18"><path d="M1 3.6H14M5.2 3.4Q5.2 1 7.5 1Q9.8 1 9.8 3.4M2.4 3.8L3 15.6Q3 17 4.6 17H10.4Q12 17 12 15.6L12.6 3.8M6 7V13M9 7V13" stroke="#8a8a8a" stroke-width="1.2" fill="none"/></svg>
<div class="a bt" style="left:320.5px;top:331px">删除会员</div>

<!-- scrollbar -->
<div class="a" style="left:1675px;top:127px;width:17px;height:17px;background:#ececec"></div>
<svg class="a" style="left:1678px;top:132px" width="11" height="7" viewBox="0 0 11 7"><path d="M0.5 6.5L5.5 1L10.5 6.5Z" fill="#a3a3a3"/></svg>
<div class="a" style="left:1677px;top:144px;width:12px;height:399px;background:#c1c1c1"></div>
<div class="a" style="left:1675px;top:913px;width:17px;height:17px;background:#ececec"></div>
<svg class="a" style="left:1678px;top:918px" width="11" height="7" viewBox="0 0 11 7"><path d="M0.5 0.5L5.5 6L10.5 0.5Z" fill="#505050"/></svg>
<div class="a" style="left:0;top:952px;width:1699px;height:2px;background:#d6d6d6"></div>
</body></html>
